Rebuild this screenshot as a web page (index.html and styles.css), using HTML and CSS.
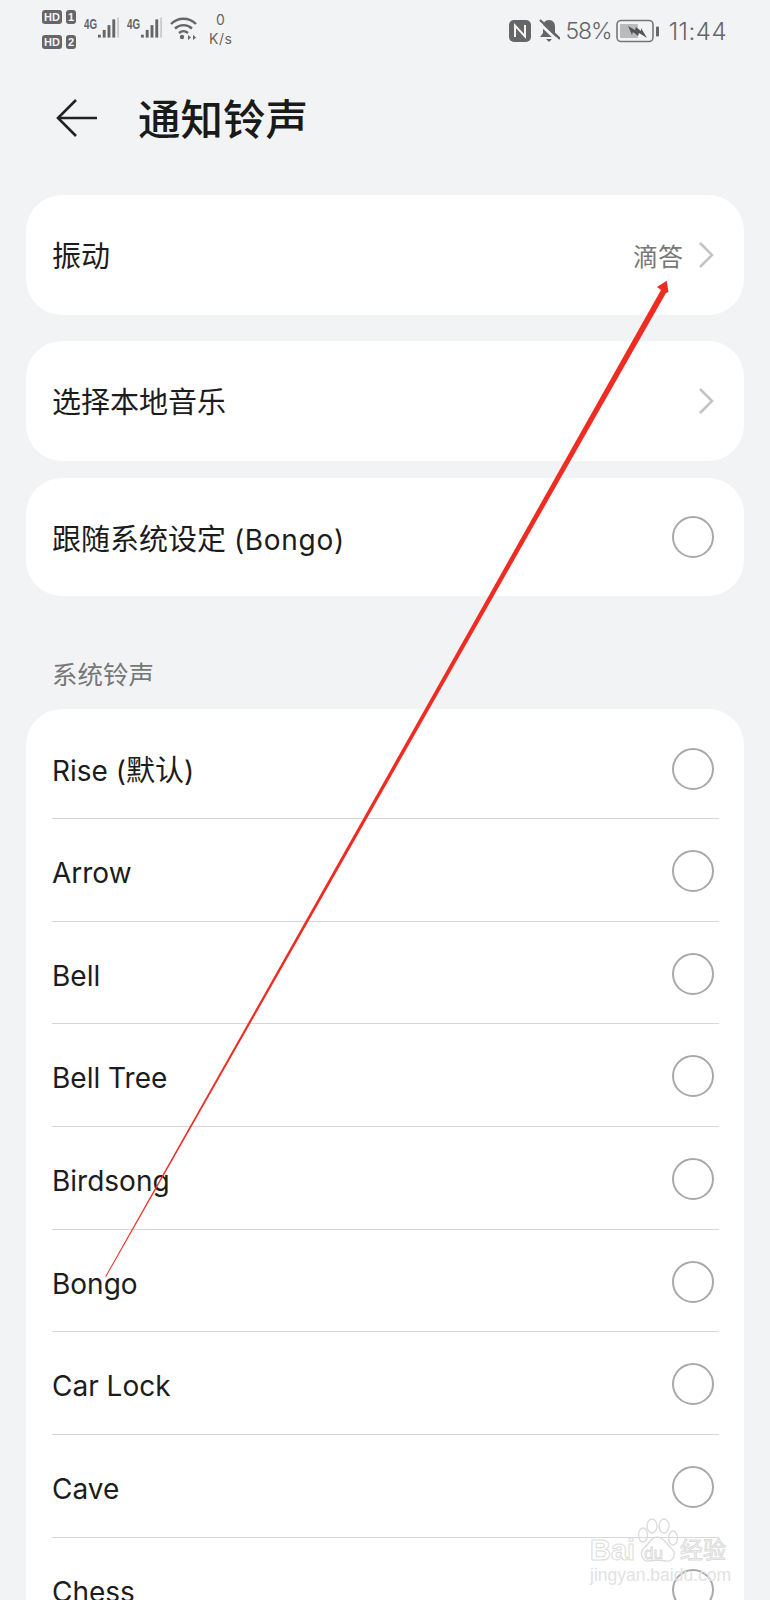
FILE: index.html
```html
<!DOCTYPE html>
<html>

<head>
  <title>通知铃声</title>
  <meta charset="utf-8" />
  <link rel="stylesheet" href="styles.css">
</head>

<body>
  <div class="phone">
    <div class="status">
      <div class="status-left">
        <div class="sims">
          <div class="sim"><span class="hd">HD</span><span class="num">1</span></div>
          <div class="sim"><span class="hd">HD</span><span class="num">2</span></div>
        </div>
        <div class="signal">
          <span class="net">4G</span>
          <svg width="24" height="24" viewBox="0 0 24 24">
            <rect x="1" y="19" width="3" height="3" fill="#666" />
            <rect x="6" y="14" width="3" height="8" fill="#666" />
            <rect x="11" y="9" width="3" height="13" fill="#666" />
            <rect x="16" y="3" width="3" height="19" fill="#666" />
            <rect x="21" y="1" width="2" height="21" fill="#ccc" />
          </svg>
        </div>
        <div class="signal">
          <span class="net">4G</span>
          <svg width="24" height="24" viewBox="0 0 24 24">
            <rect x="1" y="19" width="3" height="3" fill="#666" />
            <rect x="6" y="14" width="3" height="8" fill="#666" />
            <rect x="11" y="9" width="3" height="13" fill="#666" />
            <rect x="16" y="3" width="3" height="19" fill="#666" />
            <rect x="21" y="1" width="2" height="21" fill="#ccc" />
          </svg>
        </div>
        <svg class="wifi" width="28" height="24" viewBox="0 0 28 24" fill="none" stroke="#666" stroke-width="2.4">
          <path d="M1 8c7-7 18-7 25 0" />
          <path d="M5 12.500c5-4.500 12-4.500 17 0" />
          <path d="M9 17c3-2.500 6-2.500 9 0" />
          <circle cx="12" cy="21" r="2.200" fill="#666" stroke="none" />
          <path d="M21 21.500l-3-2.500v5zM23 19v5l3-2.500z" fill="#666" stroke="none" />
        </svg>
        <div class="speed"><span>0</span><span>K/s</span></div>
      </div>
      <div class="status-right">
        <svg width="22" height="22" viewBox="0 0 22 22">
          <rect x="0" y="0" width="22" height="22" rx="5" fill="#666" />
          <path d="M6 17V5.500l10 11V5" fill="none" stroke="#f2f3f5" stroke-width="2" />
        </svg>
        <svg class="bell" width="22" height="24" viewBox="0 0 22 24">
          <path d="M11 1c-4 0-6 3-6 7v6l-3 4h18l-3-4V8c0-4-2-7-6-7z" fill="#666" />
          <path d="M8 20h6l-3 3z" fill="#666" />
          <path d="M0 3l20 19" stroke="#f2f3f5" stroke-width="3" />
          <path d="M2 1l20 19" stroke="#666" stroke-width="2.400" />
        </svg>
        <span class="pct">58%</span>
        <svg class="battery" width="44" height="24" viewBox="0 0 44 24">
          <rect x="1" y="1.500" width="36" height="21" rx="4" fill="none" stroke="#777" stroke-width="1.600" />
          <rect x="4" y="5" width="18" height="14" rx="1" fill="#bbb" />
          <path d="M12 7l7 4 1-3 5 4 0-3 6 10-8-5-1 3-5-4-1 3z" fill="#555" />
          <rect x="40" y="7.500" width="3" height="10" rx="1" fill="#666" />
        </svg>
        <span class="clock">11:44</span>
      </div>
    </div>

    <div class="header">
      <svg class="back" width="41" height="38" viewBox="0 0 41 38" fill="none" stroke="#222" stroke-width="2.600">
        <path d="M20 1L2 19l18 18" />
        <path d="M2 19h39" />
      </svg>
      <h1>通知铃声</h1>
    </div>

    <div class="card card-first">
      <span class="label label-cjk">振动</span>
      <span class="value">滴答</span>
      <svg class="chevron" width="16" height="28" viewBox="0 0 16 28" fill="none" stroke="#c4c4c4" stroke-width="2.600">
        <path d="M2 2l12 12L2 26" />
      </svg>
    </div>
    <div class="card card-second">
      <span class="label label-cjk">选择本地音乐</span>
      <svg class="chevron" width="16" height="28" viewBox="0 0 16 28" fill="none" stroke="#c4c4c4" stroke-width="2.600">
        <path d="M2 2l12 12L2 26" />
      </svg>
    </div>
    <div class="card card-third">
      <span class="label"><span class="cjk">跟随系统设定</span> <span class="latin-wide">(Bongo)</span></span>
      <span class="radio"></span>
    </div>

    <div class="section-title">系统铃声</div>

    <div class="list">
      <div class="row row-top"><span class="label">Rise (<span class="cjk">默认</span>)</span><span class="radio"></span></div>
      <div class="row"><span class="label">Arrow</span><span class="radio"></span></div>
      <div class="row"><span class="label">Bell</span><span class="radio"></span></div>
      <div class="row"><span class="label">Bell Tree</span><span class="radio"></span></div>
      <div class="row"><span class="label">Birdsong</span><span class="radio"></span></div>
      <div class="row"><span class="label">Bongo</span><span class="radio"></span></div>
      <div class="row"><span class="label">Car Lock</span><span class="radio"></span></div>
      <div class="row"><span class="label">Cave</span><span class="radio"></span></div>
      <div class="row"><span class="label">Chess</span><span class="radio"></span></div>
    </div>

    <!-- annotation and watermark sit on top of the screenshot -->
    <svg class="annotation" width="770" height="1600" viewBox="0 0 770 1600">
      <polygon points="105.300,1276.400 106.100,1276.900 666,293 668.500,292 666.700,280.700 657,287 661,290" fill="#f02c22" />
    </svg>
    <div class="watermark">
      <svg class="paw" width="42" height="46" viewBox="0 0 42 46" fill="none" stroke="#dcdcdc" stroke-width="1.400">
        <ellipse cx="6" cy="17" rx="4.500" ry="7" />
        <ellipse cx="15" cy="8" rx="5" ry="7" />
        <ellipse cx="27" cy="8" rx="5" ry="7" />
        <ellipse cx="36" cy="20" rx="4.500" ry="7" />
        <path d="M20 19c-6 0-8 7-13 11-5 5-2 14 5 13 5-1 11-1 17 0 8 1 11-8 5-13-5-4-7-11-14-11z" />
      </svg>
      <div class="wm-bai">Bai</div>
      <div class="wm-du">du</div>
      <div class="wm-cn">经验</div>
      <div class="wm-url">jingyan.baidu.com</div>
    </div>
  </div>
</body>

</html>
```

FILE: styles.css
```css
html,
body {
  margin: 0;
  padding: 0;
  height: 1600px;
  overflow: hidden;
}
body {
  font-family: 'Inter', 'Noto Sans CJK SC', sans-serif;
  background: #f2f3f5;
  color: #1c1c1c;
}
.phone {
  position: relative;
  width: 770px;
  height: 1600px;
  overflow: hidden;
}

/* status bar */
.status {
  height: 60px;
  padding: 8px 43px 0 42px;
  box-sizing: border-box;
  display: flex;
  justify-content: space-between;
  color: #666;
}
.status-left {
  display: flex;
  align-items: flex-start;
}
.sims {
  display: flex;
  flex-direction: column;
  gap: 11px;
  padding-top: 2px;
}
.sim {
  display: flex;
  gap: 4px;
}
.hd,
.num {
  background: #666;
  color: #f2f3f5;
  border-radius: 3px;
  font-size: 11px;
  font-weight: 700;
  line-height: 14px;
  height: 14px;
  text-align: center;
  font-family: 'Liberation Sans', sans-serif;
}
.hd {
  width: 20px;
}
.num {
  width: 10px;
}
.signal {
  display: flex;
  align-items: flex-start;
  margin-left: 8px;
  width: 36px;
}
.signal + .signal {
  margin-left: 7px;
}
.net {
  font-size: 14px;
  font-weight: 700;
  line-height: 14px;
  margin-top: 9px;
  font-family: 'Liberation Sans', sans-serif;
  transform: scaleX(0.7);
  transform-origin: left;
  width: 13px;
}
.signal svg {
  margin-top: 8px;
}
.wifi {
  margin: 8px 0 0 7px;
}
.speed {
  display: flex;
  flex-direction: column;
  align-items: center;
  margin-left: 11px;
  font-size: 14px;
  line-height: 19px;
  letter-spacing: 0.5px;
  padding-top: 2px;
}
.status-right {
  display: flex;
  align-items: center;
  height: 46px;
}
.bell {
  margin-left: 7px;
}
.pct {
  font-size: 23px;
  font-weight: 300;
  letter-spacing: -1px;
  margin-left: 5px;
}
.battery {
  margin-left: 4px;
}
.clock {
  font-size: 24px;
  font-weight: 300;
  letter-spacing: 0.5px;
  margin-left: 9px;
}

/* title row */
.header {
  height: 135px;
  padding: 0 0 0 56px;
  box-sizing: border-box;
  display: flex;
  align-items: flex-start;
}
.back {
  margin-top: 39px;
}
h1 {
  margin: 33px 0 0 41px;
  font-size: 42.500px;
  line-height: 54px;
  font-weight: 500;
  color: #1a1a1a;
}

/* cards */
.card {
  margin: 0 26px;
  height: 120px;
  padding: 0 30px 0 26px;
  box-sizing: border-box;
  background: #fff;
  border-radius: 36px;
  display: flex;
  align-items: center;
}
.card-second {
  margin-top: 26px;
}
.card-third {
  height: 118px;
  margin-top: 17px;
}
.label {
  font-size: 28px;
  flex: 1;
}
.label-cjk {
  padding-bottom: 2px;
}
.label-cjk,
.cjk {
  font-size: 29px;
}
.latin-wide {
  letter-spacing: 0.7px;
}
.value {
  font-size: 25px;
  color: #777;
  margin-right: 15px;
}
.radio {
  width: 38px;
  height: 38px;
  border: 2px solid #a9a9a9;
  border-radius: 50%;
  margin-top: -4px;
  flex: none;
}
.card .radio {
  margin-top: 0;
}
.section-title {
  margin: 61px 0 0 52px;
  height: 52px;
  font-size: 25.500px;
  line-height: 36px;
  color: #777;
}

/* ringtone list */
.list {
  margin: 0 26px;
  background: #fff;
  border-radius: 36px 36px 0 0;
  padding: 0 25px 0 26px;
}
.row {
  height: 102.700px;
  padding: 6px 5px 0 0;
  box-sizing: border-box;
  border-bottom: 1px solid #d8d8d8;
  display: flex;
  align-items: center;
}
.row-top {
  height: 110px;
  padding-top: 8px;
}
.row-top .radio {
  margin-top: 2px;
}
.row:last-child {
  border-bottom: 0;
}

/* on top */
.annotation {
  position: absolute;
  top: 0;
  left: 0;
}
.watermark {
  position: absolute;
  left: 590px;
  top: 1518px;
  width: 140px;
  height: 64px;
}
.paw {
  position: absolute;
  left: 47px;
  top: 0;
}
.wm-bai,
.wm-du,
.wm-cn {
  position: absolute;
  white-space: nowrap;
  color: #fff;
  -webkit-text-stroke: 1px #dcdcdc;
}
.wm-bai {
  left: 0;
  top: 15px;
  font-family: 'Liberation Sans', sans-serif;
  font-size: 29px;
  line-height: 34px;
  font-weight: 700;
}
.wm-du {
  left: 54px;
  top: 26px;
  font-family: 'Liberation Sans', sans-serif;
  font-size: 17px;
  line-height: 20px;
}
.wm-cn {
  left: 90px;
  top: 17px;
  font-size: 23px;
  line-height: 30px;
}
.wm-url {
  position: absolute;
  left: 0;
  top: 47px;
  white-space: nowrap;
  font-family: 'Liberation Sans', sans-serif;
  font-size: 17.500px;
  line-height: 20px;
  color: #e2e2e2;
}
```
